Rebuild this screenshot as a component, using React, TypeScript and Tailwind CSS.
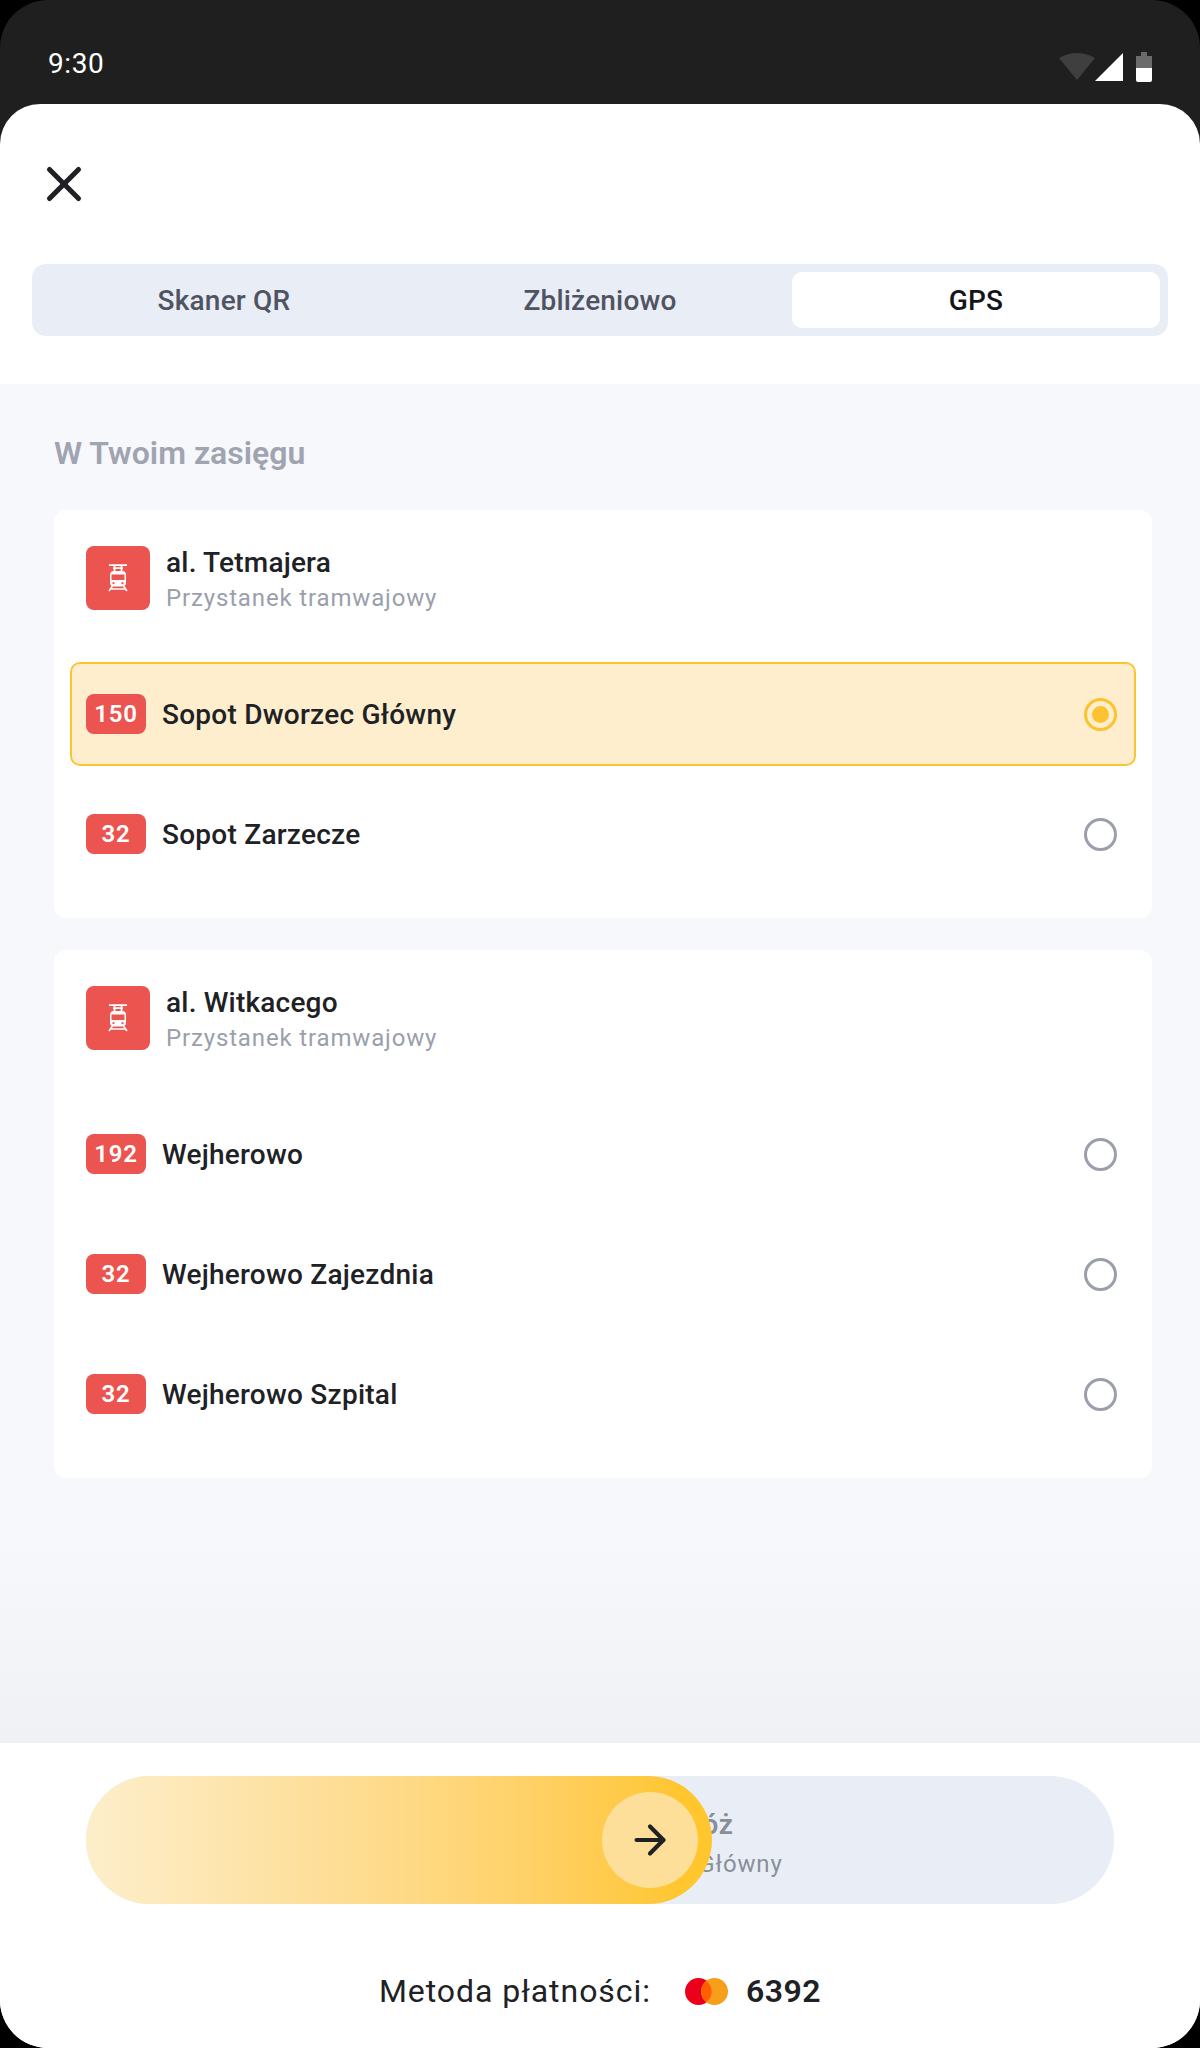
import type { ReactNode } from "react";
import { ArrowRight, X } from "lucide-react";

const font = { fontFamily: "Roboto, sans-serif" };

function TramIcon() {
  return (
    <svg width="20" height="28" viewBox="0 0 20 28" fill="none">
      <path d="M1 1.2h18M6.5 1v6M13.5 1v6M5 4.2h10" stroke="#fff" strokeWidth="1.8" />
      <rect x="2" y="7" width="16" height="15.5" rx="4" fill="#fff" />
      <rect x="3.5" y="10.5" width="13" height="5.5" fill="#ec5450" />
      <circle cx="5.5" cy="19.2" r="1.1" fill="#ec5450" />
      <circle cx="14.5" cy="19.2" r="1.1" fill="#ec5450" />
      <path d="M4.5 22l-3.5 5M15.5 22l3.500 5M3 25h14" stroke="#fff" strokeWidth="1.6" />
    </svg>
  );
}

function Radio({ checked }: { checked?: boolean }) {
  return (
    <div
      className={`w-[33px] h-[33px] rounded-full border-[3px] flex items-center justify-center ${
        checked ? "border-[#fdc22f]" : "border-[#9a9fab]"
      }`}
    >
      {checked && <div className="w-[17px] h-[17px] rounded-full bg-[#fdc22f]" />}
    </div>
  );
}

function LineRow({ line, name, selected }: { line: string; name: string; selected?: boolean }) {
  return (
    <div
      className={`mx-4 h-[104px] flex items-center pl-[14px] pr-[17px] rounded-[10px] border-2 ${
        selected ? "bg-[#feeecd] border-[#fbc432]" : "border-transparent"
      }`}
    >
      <div className="w-[60px] h-[40px] rounded-[8px] bg-[#ec5450] text-white text-[24px] font-semibold tracking-[0.8px] flex items-center justify-center">
        {line}
      </div>
      <div className="ml-4 pt-[1px] flex-1 text-[28px] font-medium tracking-[0.25px] text-[#202124]">{name}</div>
      <Radio checked={selected} />
    </div>
  );
}

function StopCard({ name, children }: { name: string; children: ReactNode }) {
  return (
    <div className="bg-white rounded-[12px] pt-[36px] pb-[32px]">
      <div className="flex pl-[32px] items-start">
        <div className="w-[64px] h-[64px] rounded-[8px] bg-[#ec5450] flex items-center justify-center">
          <TramIcon />
        </div>
        <div className="ml-4 -mt-[1px]">
          <div className="text-[28px] leading-[36px] font-medium tracking-[0.2px] text-[#202124]">{name}</div>
          <div className="text-[24px] leading-[34px] text-[#9a9fab] tracking-[0.85px]">Przystanek tramwajowy</div>
        </div>
      </div>
      <div className="pt-[47px] flex flex-col gap-[16px]">{children}</div>
    </div>
  );
}

export default function App() {
  return (
    <div className="h-[2048px] w-[1200px] bg-black" style={font}>
      <div className="h-full rounded-[48px] overflow-hidden bg-[#1f1f1f] flex flex-col">
        {/* Status bar */}
        <div className="h-[104px] shrink-0 flex items-start justify-between pl-[48px] pr-[48px] pt-[46px]">
          <span className="text-white text-[28px] leading-[36px] tracking-[0.6px]">9:30</span>
          <svg width="93" height="30" viewBox="0 0 93 30" className="mt-[6px]">
            <path d="M0 6 Q18 -4 36 6 L18 28 Z" fill="#3f3f3f" />
            <path d="M36 29 L64 1 V29 Z" fill="#fff" />
            <path d="M82 0h6v4h5v12h-16v-12h5z" fill="#6b6b6b" />
            <path d="M77 16h16v12a2 2 0 0 1-2 2h-12a2 2 0 0 1-2-2z" fill="#fff" />
          </svg>
        </div>

        {/* Sheet */}
        <div className="flex-1 bg-white rounded-t-[40px] flex flex-col min-h-0">
          <div className="h-[280px] shrink-0 px-[32px]">
            <div className="h-[160px] flex items-center pl-[3px]">
              <X size={58} strokeWidth={2.1} className="text-[#202124]" />
            </div>
            <div className="h-[72px] rounded-[14px] bg-[#e9eef6] p-[8px] grid grid-cols-[368px_384px_368px] text-[28px] font-medium tracking-[0.2px]">
              <div className="flex items-center justify-center pt-[1px] text-[#505462]">Skaner QR</div>
              <div className="flex items-center justify-center pt-[1px] text-[#505462]">Zbliżeniowo</div>
              <div className="flex items-center justify-center pt-[1px] bg-white rounded-[10px] text-[#14151a]">GPS</div>
            </div>
          </div>

          {/* Lists */}
          <div className="flex-1 pl-[54px] pr-[48px] pt-[50px] bg-linear-to-b from-[#f6f8fc] from-[85%] to-[#eff1f5]">
            <div className="text-[32px] leading-[38px] font-semibold text-[#9fa4b0]">W Twoim zasięgu</div>
            <div className="mt-[38px] flex flex-col gap-[32px]">
              <StopCard name="al. Tetmajera">
                <LineRow line="150" name="Sopot Dworzec Główny" selected />
                <LineRow line="32" name="Sopot Zarzecze" />
              </StopCard>
              <StopCard name="al. Witkacego">
                <LineRow line="192" name="Wejherowo" />
                <LineRow line="32" name="Wejherowo Zajezdnia" />
                <LineRow line="32" name="Wejherowo Szpital" />
              </StopCard>
            </div>
          </div>

          {/* Footer */}
          <div className="h-[305px] shrink-0 bg-white px-[86px] pt-[33px] flex flex-col">
            <div className="relative h-[128px] rounded-full bg-[#e9eef6] flex flex-col justify-center pl-[433px] pt-[8px]">
              <div className="text-[28px] leading-[40px] font-semibold tracking-[0.6px] text-[#8a8e99]">Ruszaj w podróż</div>
              <div className="text-[24px] leading-[38px] text-[#8a8e99] tracking-[0.85px]">Sopot Dworzec Główny</div>
              <div className="absolute left-0 top-0 h-[128px] w-[626px] rounded-full bg-linear-to-r from-[#fdeecb] to-[#ffc62e] to-[95%] flex items-center justify-end pr-[14px]">
                <div className="w-[96px] h-[96px] rounded-full bg-[#fddf99] flex items-center justify-center">
                  <ArrowRight size={46} strokeWidth={2.2} className="text-[#202124]" />
                </div>
              </div>
            </div>
            <div className="mt-[63px] flex items-center justify-center text-[#202124]">
              <span className="text-[32px] tracking-[0.95px]">Metoda płatności:</span>
              <svg width="43" height="27" viewBox="0 0 43 27" className="ml-[34px]">
                <circle cx="13.500" cy="13.500" r="13.500" fill="#eb001b" />
                <circle cx="29.500" cy="13.500" r="13.500" fill="#f79e1b" />
                <path d="M21.500 2.900a13.500 13.500 0 0 1 0 21.200a13.500 13.500 0 0 1 0-21.200z" fill="#ff5f00" />
              </svg>
              <span className="ml-[18px] text-[32px] font-semibold tracking-[0.5px]">6392</span>
            </div>
          </div>
        </div>
      </div>
    </div>
  );
}
